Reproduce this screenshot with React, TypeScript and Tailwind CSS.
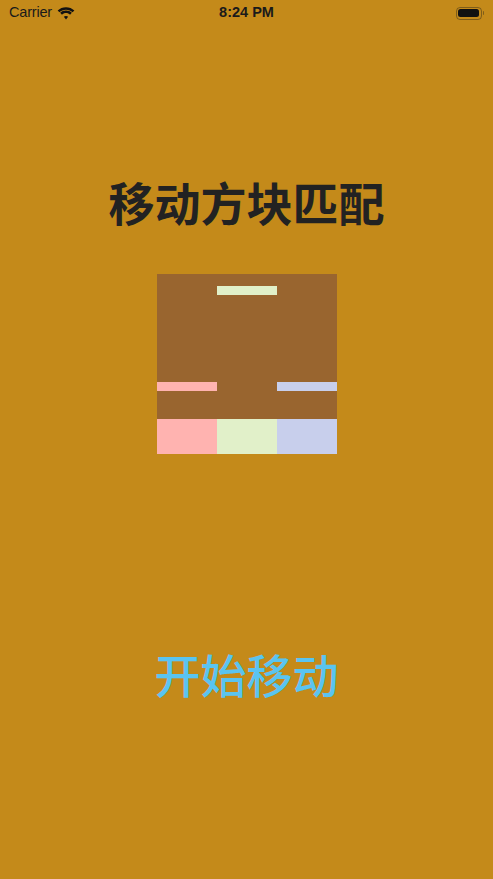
import React from "react";

const StatusBar = () => (
  <div className="h-[26px] flex items-center justify-between px-[9px] text-[#1a1a1a] relative">
    <div className="flex items-center gap-[5px]">
      <span className="text-[14.5px] tracking-[-0.2px]">Carrier</span>
      <svg width="18" height="13" viewBox="0 0 17 12" fill="#111">
        <path d="M8.5 2.4c2.4 0 4.6.9 6.2 2.5l1.7-1.7C14.3 1.1 11.5 0 8.5 0S2.7 1.1.6 3.2l1.7 1.7C3.9 3.3 6.1 2.4 8.5 2.4z" />
        <path d="M8.5 5.6c1.5 0 2.8.6 3.8 1.5l1.7-1.7C12.6 4 10.6 3.2 8.5 3.2S4.4 4 3 5.4l1.7 1.7c1-.9 2.3-1.5 3.8-1.5z" />
        <path d="M8.5 8.3c.8 0 1.5.3 2 .8L8.5 11.6 6.5 9.1c.5-.5 1.2-.8 2-.8z" />
      </svg>
    </div>
    <span className="absolute left-1/2 -translate-x-1/2 text-[14.5px] font-bold">8:24 PM</span>
    <div className="flex items-center gap-[1px]">
      <div className="w-[26px] h-[13px] rounded-[4px] border border-[#1a1a1a]/40 p-[1.5px]">
        <div className="w-full h-full rounded-[2.5px] bg-[#111]" />
      </div>
      <div className="w-[1.5px] h-[4px] rounded-r-sm bg-[#1a1a1a]/40" />
    </div>
  </div>
);

export default function App() {
  return (
    <div
      className="w-[493px] h-[879px] bg-[#C48A1A] flex flex-col"
      style={{ fontFamily: '"Liberation Sans", "Noto Sans CJK SC", sans-serif' }}
    >
      <StatusBar />
      <h1 className="mt-[153px] text-center text-[46px] leading-[52px] font-bold text-[#222222]">
        移动方块匹配
      </h1>
      <div className="mt-[43px] mx-auto w-[180px] h-[180px] bg-[#99652F] flex flex-col">
        <div className="mt-[12px] mx-auto w-[60px] h-[9px] bg-[#E1F0C8]" />
        <div className="mt-[87px] flex justify-between h-[9px]">
          <div className="w-[60px] bg-[#FFB3B0]" />
          <div className="w-[60px] bg-[#C8CFEC]" />
        </div>
        <div className="mt-[28px] flex h-[35px]">
          <div className="w-[60px] bg-[#FFB3B0]" />
          <div className="w-[60px] bg-[#E1F0C9]" />
          <div className="w-[60px] bg-[#C8CFEC]" />
        </div>
      </div>
      <button className="mt-[197px] mx-auto text-[46px] leading-[52px] font-medium text-[#5AC4F0]">
        开始移动
      </button>
    </div>
  );
}
